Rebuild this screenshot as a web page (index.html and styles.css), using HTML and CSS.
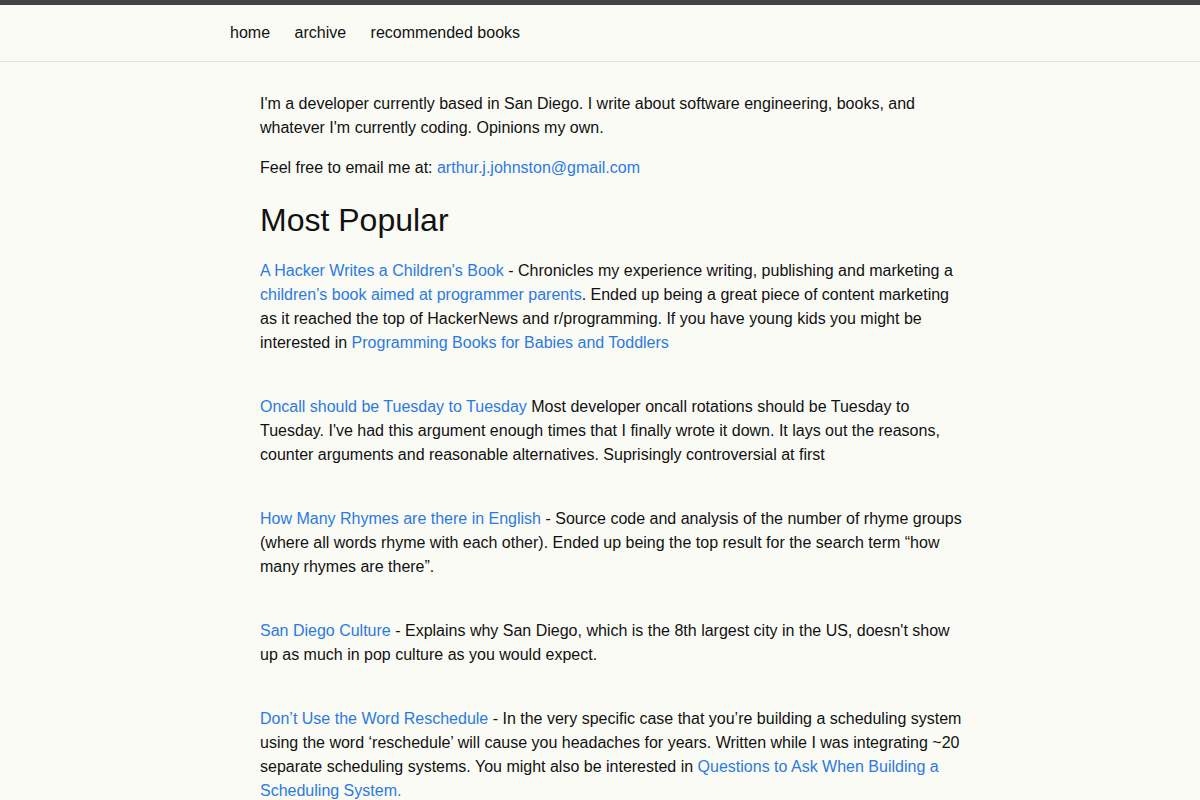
FILE: index.html
```html
<!DOCTYPE html>
<html lang="en">
<head>
    <meta charset="UTF-8">
    <meta name="viewport" content="width=device-width, initial-scale=1.0">
    <title>Arthur Johnston</title>
    <link rel="stylesheet" href="styles.css">
</head>
<body>

    <header class="site-header">
        <div class="wrapper">
            <nav class="site-nav">
                <a class="page-link" href="#">home</a>
                <a class="page-link" href="#">archive</a>
                <a class="page-link" href="#">recommended books</a>
            </nav>
        </div>
    </header>

    <main class="page-content">
        <div class="wrapper">
            <p>I'm a developer currently based in San Diego. I write about software engineering, books, and whatever I'm currently coding. Opinions my own.</p>
            <p>Feel free to email me at: <a href="#">arthur.j.johnston@gmail.com</a></p>

            <h2>Most Popular</h2>

            <p class="item"><a href="#">A Hacker Writes a Children's Book</a> - Chronicles my experience writing, publishing and marketing a <a href="#">children’s book aimed at programmer parents</a>. Ended up being a great piece of content marketing as it reached the top of HackerNews and r/programming. If you have young kids you might be interested in <a href="#">Programming Books for Babies and Toddlers</a></p>

            <p class="item"><a href="#">Oncall should be Tuesday to Tuesday</a> Most developer oncall rotations should be Tuesday to Tuesday. I've had this argument enough times that I finally wrote it down. It lays out the reasons, counter arguments and reasonable alternatives. Suprisingly controversial at first</p>

            <p class="item"><a href="#">How Many Rhymes are there in English</a> - Source code and analysis of the number of rhyme groups (where all words rhyme with each other). Ended up being the top result for the search term “how many rhymes are there”.</p>

            <p class="item"><a href="#">San Diego Culture</a> - Explains why San Diego, which is the 8th largest city in the US, doesn't show up as much in pop culture as you would expect.</p>

            <p class="item"><a href="#">Don’t Use the Word Reschedule</a> - In the very specific case that you’re building a scheduling system using the word ‘reschedule’ will cause you headaches for years. Written while I was integrating ~20 separate scheduling systems. You might also be interested in <a href="#">Questions to Ask When Building a Scheduling System.</a></p>
        </div>
    </main>

</body>
</html>
```

FILE: styles.css
```css
/* Reset */
* {
    margin: 0;
    padding: 0;
    box-sizing: border-box;
}

body {
    font: 400 16px/1.5 "Liberation Sans", Arial, sans-serif;
    color: #111;
    background: #fbfbf6;
}

a {
    color: #2a7ae2;
    text-decoration: none;
}

.wrapper {
    max-width: 740px;
    margin: 0 auto;
}

/* Header */
.site-header {
    border-top: 5px solid #424242;
    border-bottom: 1px solid #e4e4df;
    min-height: 57px;
}

.site-nav {
    display: flex;
    gap: 24.5px;
    line-height: 56px;
}

.site-nav .page-link {
    color: #111;
}

/* Content */
.page-content {
    padding: 30px 0;
}

.page-content .wrapper {
    padding-left: 30px;
}

.page-content p {
    margin-bottom: 16px;
}

.page-content p.item {
    margin-bottom: 40px;
}

.page-content h2 {
    font-size: 32px;
    font-weight: 400;
    line-height: 48px;
    margin-bottom: 15px;
}
```
